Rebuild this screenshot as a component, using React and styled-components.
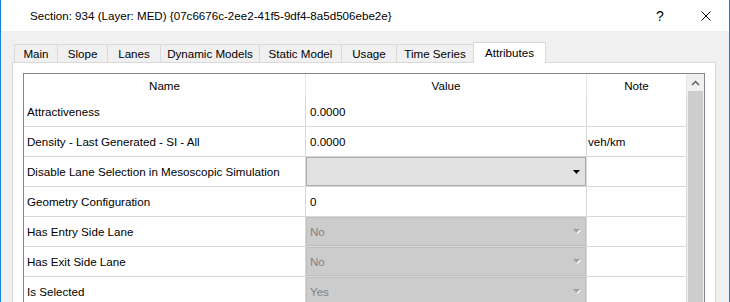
import React from 'react'
import styled, { createGlobalStyle } from 'styled-components'

const GlobalStyle = createGlobalStyle`
    html, body {
        margin: 0;
        padding: 0;
        overflow: hidden;
        font-family: "Liberation Sans", Arial, sans-serif;
        font-size: 11.6px;
        color: #000;
    }
`

const Window = styled.div`
    width: 730px;
    height: 302px;
    box-sizing: border-box;
    border-left: 1px solid #1883d7;
    border-right: 1px solid #1883d7;
    background: #f0f0f0;
    display: flex;
    flex-direction: column;
    overflow: hidden;
`

const TitleBar = styled.div`
    height: 31px;
    flex-shrink: 0;
    background: #fff;
    display: flex;
    align-items: center;
    padding-left: 29px;
`

const Title = styled.span`
    flex: 1;
    font-size: 11.6px;
    white-space: nowrap;
`

const CaptionButton = styled.div`
    width: 46px;
    height: 31px;
    display: flex;
    align-items: center;
    justify-content: center;
    font-size: 14px;
`

const Body = styled.div`
    flex: 1;
    display: flex;
    flex-direction: column;
    padding: 11px 13px 0 11px;
    min-height: 0;
`

const TabBar = styled.div`
    height: 20px;
    display: flex;
    align-items: flex-end;
    padding-left: 2px;
    flex-shrink: 0;
`

const Tab = styled.div`
    width: ${p => p.$w}px;
    height: ${p => (p.$active ? 21 : 18)}px;
    margin-bottom: ${p => (p.$active ? -1 : 0)}px;
    margin-left: -1px;
    box-sizing: border-box;
    border: 1px solid #d9d9d9;
    border-bottom: none;
    background: ${p => (p.$active ? '#fff' : '#f0f0f0')};
    display: flex;
    align-items: center;
    justify-content: center;
    padding-bottom: ${p => (p.$active ? 2 : 0)}px;
    position: relative;
    z-index: ${p => (p.$active ? 1 : 0)};
    white-space: nowrap;

    &:first-child {
        margin-left: 0;
    }
`

const Pane = styled.div`
    flex: 1;
    background: #fff;
    border: 1px solid #d9d9d9;
    border-bottom: none;
    padding: 10px 10px 0 10px;
    min-height: 0;
`

const Frame = styled.div`
    height: 100%;
    border: 1px solid #828790;
    border-bottom: none;
    display: flex;
    overflow: hidden;
`

const Grid = styled.div`
    display: grid;
    grid-template-columns: 282px 281px 100px;
    grid-auto-rows: 30px;
    grid-template-rows: 23px;
    align-content: start;
`

const HeaderCell = styled.div`
    border-right: 1px solid #e5e5e5;
    display: flex;
    align-items: center;
    justify-content: center;
    padding-bottom: 1px;
`

const Cell = styled.div`
    border-right: 1px solid #d8d8d8;
    border-bottom: 1px solid #d8d8d8;
    display: flex;
    align-items: center;
    padding-left: ${p => p.$pad || 0}px;
    white-space: nowrap;
    overflow: hidden;
`

const Combo = styled.div`
    flex: 1;
    align-self: stretch;
    box-sizing: border-box;
    border: 1px solid ${p => (p.$disabled ? '#bfbfbf' : '#adadad')};
    background: ${p => (p.$disabled ? '#cccccc' : '#e1e1e1')};
    color: ${p => (p.$disabled ? '#838383' : '#000')};
    display: flex;
    align-items: center;
    padding: 0 4px 0 3px;
`

const ComboText = styled.span`
    flex: 1;
`

const Scrollbar = styled.div`
    width: 17px;
    flex-shrink: 0;
    background: #f0f0f0;
    display: flex;
    flex-direction: column;
`

const ScrollArrow = styled.div`
    height: 17px;
    display: flex;
    align-items: center;
    justify-content: center;
`

const Thumb = styled.div`
    flex: 1;
    margin: 0 1px;
    background: #cdcdcd;
`

const Arrow = ({ disabled }) =>
    disabled ? (
        <svg width="9" height="6" viewBox="0 0 9 6">
            <path d="M2 1h7L5.5 5z" fill="#fff" />
            <path d="M1 0h7L4.5 4z" fill="#a0a0a0" />
        </svg>
    ) : (
        <svg width="9" height="6" viewBox="0 0 9 6">
            <path d="M1 1h7L4.5 5z" fill="#000" />
        </svg>
    )

const tabs = [
    ['Main', 44],
    ['Slope', 51],
    ['Lanes', 54],
    ['Dynamic Models', 100],
    ['Static Model', 83],
    ['Usage', 56],
    ['Time Series', 78],
    ['Attributes', 73],
]

const rows = [
    { name: 'Attractiveness', value: '0.0000' },
    { name: 'Density - Last Generated - SI - All', value: '0.0000', note: 'veh/km' },
    { name: 'Disable Lane Selection in Mesoscopic Simulation', combo: '' },
    { name: 'Geometry Configuration', value: '0' },
    { name: 'Has Entry Side Lane', combo: 'No', disabled: true },
    { name: 'Has Exit Side Lane', combo: 'No', disabled: true },
    { name: 'Is Selected', combo: 'Yes', disabled: true },
]

const App = () => {
    return (
        <Window>
            <GlobalStyle />
            <TitleBar>
                <Title>Section: 934 (Layer: MED) {'{07c6676c-2ee2-41f5-9df4-8a5d506ebe2e}'}</Title>
                <CaptionButton>?</CaptionButton>
                <CaptionButton>
                    <svg width="10" height="10" viewBox="0 0 10 10">
                        <path d="M0.5 0.5l9 9M9.5 0.5l-9 9" stroke="#000" strokeWidth="1" />
                    </svg>
                </CaptionButton>
            </TitleBar>
            <Body>
                <TabBar>
                    {tabs.map(([label, w]) => (
                        <Tab key={label} $w={w} $active={label === 'Attributes'}>{label}</Tab>
                    ))}
                </TabBar>
                <Pane>
                    <Frame>
                        <Grid>
                            <HeaderCell>Name</HeaderCell>
                            <HeaderCell>Value</HeaderCell>
                            <HeaderCell>Note</HeaderCell>
                            {rows.map(row => (
                                <React.Fragment key={row.name}>
                                    <Cell $pad={3}>{row.name}</Cell>
                                    {row.combo !== undefined ? (
                                        <Cell>
                                            <Combo $disabled={row.disabled}>
                                                <ComboText>{row.combo}</ComboText>
                                                <Arrow disabled={row.disabled} />
                                            </Combo>
                                        </Cell>
                                    ) : (
                                        <Cell $pad={4}>{row.value}</Cell>
                                    )}
                                    <Cell $pad={1}>{row.note}</Cell>
                                </React.Fragment>
                            ))}
                        </Grid>
                        <Scrollbar>
                            <ScrollArrow>
                                <svg width="9" height="6" viewBox="0 0 9 6">
                                    <path d="M1 5l3.5-3.5L8 5" fill="none" stroke="#606060" strokeWidth="1.5" />
                                </svg>
                            </ScrollArrow>
                            <Thumb />
                        </Scrollbar>
                    </Frame>
                </Pane>
            </Body>
        </Window>
    )
}

export default App
